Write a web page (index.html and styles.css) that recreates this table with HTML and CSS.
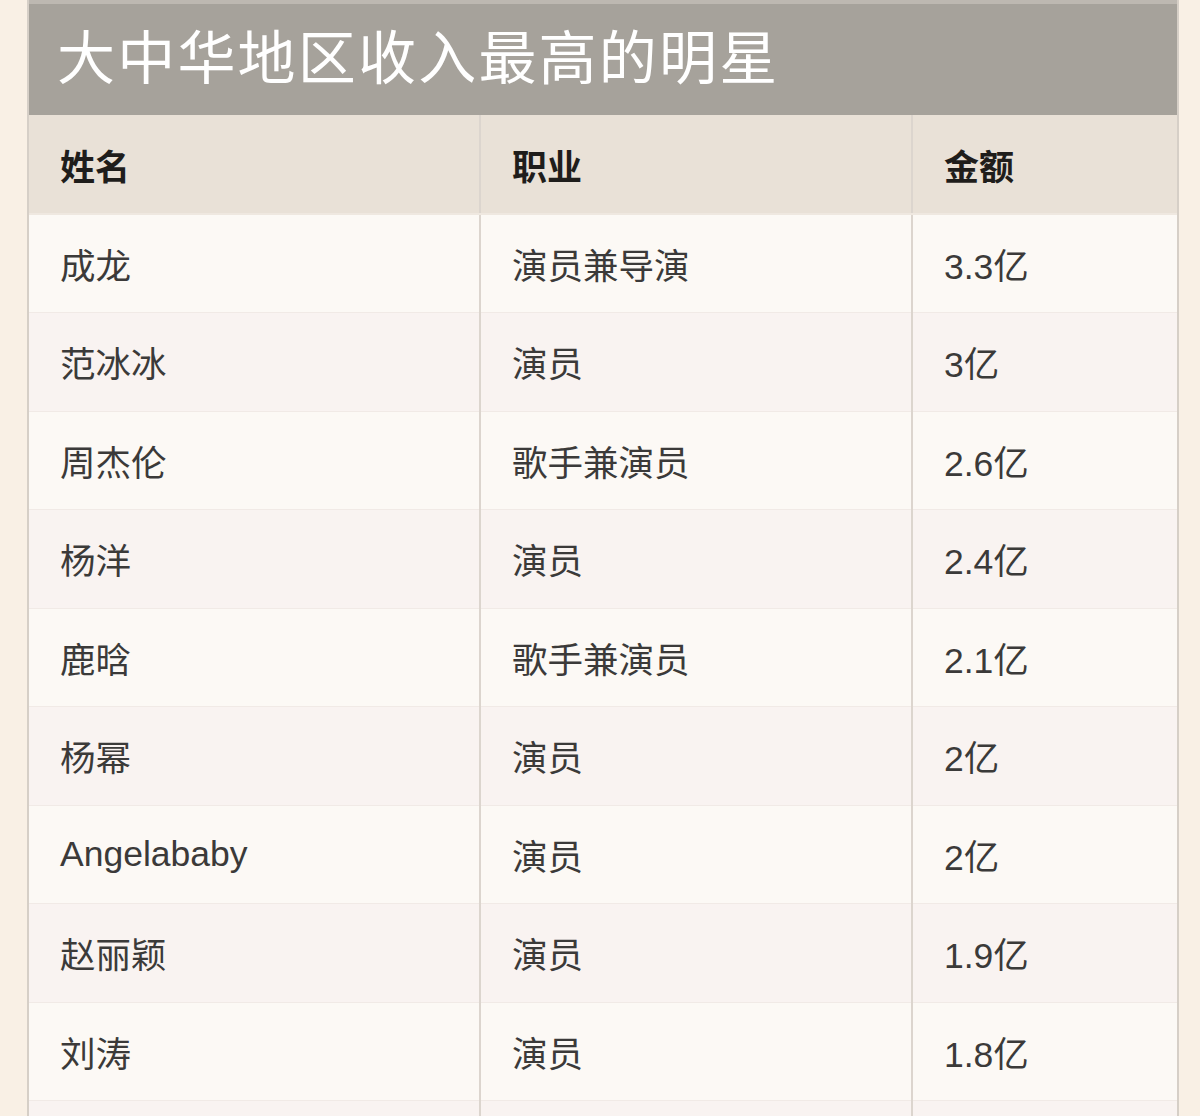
FILE: index.html
```html
<!DOCTYPE html>
<html lang="zh-CN">
<head>
<meta charset="utf-8">
<title>大中华地区收入最高的明星</title>
<link rel="stylesheet" href="styles.css">
</head>
<body>
<div class="page">
  <div class="card">
    <div class="title">大中华地区收入最高的明星</div>
    <table class="rank">
      <colgroup>
        <col class="c-name">
        <col class="c-job">
        <col class="c-amt">
      </colgroup>
      <thead>
        <tr><th>姓名</th><th>职业</th><th>金额</th></tr>
      </thead>
      <tbody>
        <tr><td>成龙</td><td>演员兼导演</td><td>3.3亿</td></tr>
        <tr><td>范冰冰</td><td>演员</td><td>3亿</td></tr>
        <tr><td>周杰伦</td><td>歌手兼演员</td><td>2.6亿</td></tr>
        <tr><td>杨洋</td><td>演员</td><td>2.4亿</td></tr>
        <tr><td>鹿晗</td><td>歌手兼演员</td><td>2.1亿</td></tr>
        <tr><td>杨幂</td><td>演员</td><td>2亿</td></tr>
        <tr><td>Angelababy</td><td>演员</td><td>2亿</td></tr>
        <tr><td>赵丽颖</td><td>演员</td><td>1.9亿</td></tr>
        <tr><td>刘涛</td><td>演员</td><td>1.8亿</td></tr>
        <tr><td>&nbsp;</td><td>&nbsp;</td><td>&nbsp;</td></tr>
      </tbody>
    </table>
  </div>
</div>
</body>
</html>
```

FILE: styles.css
```css
html, body {
  margin: 0;
  padding: 0;
  background: #f9f0e5;
}
body {
  font-family: "Liberation Sans", "Noto Sans CJK SC", sans-serif;
  height: 1116px;
  overflow: hidden;
}
.page {
  padding-left: 27px;
}
.card {
  width: 1148px;
  border-left: 2px solid #d6cfc7;
  border-right: 2px solid #d6cfc7;
  background: #fbf8f4;
}
.title {
  height: 115px;
  box-sizing: border-box;
  background: #a6a29b;
  border-top: 4px solid #bdb8b1;
  color: #ffffff;
  font-family: "Noto Sans CJK SC", sans-serif;
  font-size: 58px;
  font-weight: 400;
  line-height: 100px;
  padding-left: 28px;
  letter-spacing: 2.2px;
}
.rank {
  width: 100%;
  border-collapse: collapse;
  table-layout: fixed;
}
.c-name { width: 451px; }
.c-job { width: 432px; }
.c-amt { width: auto; }
.rank th,
.rank td {
  text-align: left;
  padding: 0 0 0 31px;
  border-left: 2px solid #dcd5ce;
  vertical-align: middle;
}
.rank th:first-child,
.rank td:first-child {
  border-left: none;
}
.rank th {
  height: 98px;
  background: #e9e1d7;
  color: #1f1d1b;
  font-size: 35px;
  font-weight: 700;
  font-family: "Noto Sans CJK SC", sans-serif;
  border-bottom: 2px solid #efe8e0;
}
.rank td {
  height: 98.5px;
  box-sizing: border-box;
  color: #3b3a39;
  font-size: 35.5px;
  border-bottom: 1px solid #f1eae6;
}
.rank tbody tr:nth-child(odd) td {
  background: #fcf9f5;
}
.rank tbody tr:nth-child(even) td {
  background: #f9f3f1;
}
```
